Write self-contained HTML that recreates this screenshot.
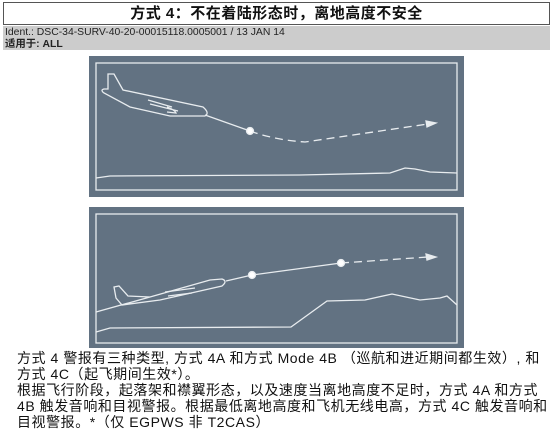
<!DOCTYPE html>
<html><head><meta charset="utf-8"><style>
body{margin:0;width:554px;height:434px;background:#fff;font-family:"Liberation Sans","Noto Sans CJK SC",sans-serif;position:relative;overflow:hidden}
.t{position:absolute;left:3px;top:2px;width:545px;height:21px;border:1px solid #555;text-align:center;font-weight:bold;font-size:15px;letter-spacing:0.5px;line-height:21px;color:#111}
.g{position:absolute;left:3px;top:26px;width:547px;height:24px;background:#cccccc;font-size:10.4px;line-height:11.5px;color:#222;padding-left:2px;padding-top:1px;box-sizing:border-box}
.p{position:absolute;left:17px;top:350px;font-size:14px;letter-spacing:0.55px;line-height:16px;color:#111;white-space:nowrap}
svg{position:absolute;left:0;top:0}
</style></head><body>
<div class="t">方式 4：不在着陆形态时，离地高度不安全</div>
<div class="g">Ident.: DSC-34-SURV-40-20-00015118.0005001 / 13 JAN 14<br><b>适用于: ALL</b></div>
<svg width="554" height="434" fill="none" stroke="#e8ecef" stroke-width="1.3">
<rect x="89" y="56" width="375" height="141" fill="#627282" stroke="none"/>
<rect x="96" y="63" width="361" height="127"/>
<path d="M108 74 L114 74 L123 90 L203 107 Q210 113 205 116 L170 116 L130 107 L104 93 Q100 90 104 89 L108 89 Z"/>
<path d="M148 100 L172 107 M150 104 L178 111 M167 107 Q175 110 176 113 L167 112"/>
<path d="M205 115 L250 131"/>
<path d="M250 131 Q275 140 305 142 L428 124" stroke-dasharray="8 5"/>
<path d="M426 121 L436 123 L427 127 Z" fill="#e8ecef"/>
<circle cx="250" cy="131" r="3.5" fill="#fff"/>
<path d="M96 178 L110 176 L300 175 L390 173 L405 168 L415 169 L430 172 L457 173"/>
<rect x="89" y="207" width="375" height="141" fill="#627282" stroke="none"/>
<rect x="96" y="214" width="361" height="129"/>
<path d="M96 312 L150 297 L210 280 L222 279 Q228 281 222 286 L200 291 L160 300 L122 305 L116 298 L114 287 L119 286 L128 296 L150 297"/>
<path d="M165 292 L195 288 M168 296 L192 293"/>
<path d="M226 281 L252 275 L341 263"/>
<path d="M341 263 L428 257" stroke-dasharray="8 5"/>
<path d="M426 254 L436 257 L427 260 Z" fill="#e8ecef"/>
<circle cx="252" cy="275" r="3.5" fill="#fff"/>
<circle cx="341" cy="263" r="3.5" fill="#fff"/>
<path d="M96 332 L110 328 L291 327 L327 301 L365 300 L392 294 L420 300 L440 298 L447 296 L457 305"/>
</svg>
<div class="p">方式 4 警报有三种类型, 方式 4A 和方式 Mode 4B （巡航和进近期间都生效）, 和<br>方式 4C（起飞期间生效*）。<br>根据飞行阶段，起落架和襟翼形态，以及速度当离地高度不足时，方式 4A 和方式<br>4B 触发音响和目视警报。根据最低离地高度和飞机无线电高，方式 4C 触发音响和<br>目视警报。*（仅 EGPWS 非 T2CAS）</div>
</body></html>
